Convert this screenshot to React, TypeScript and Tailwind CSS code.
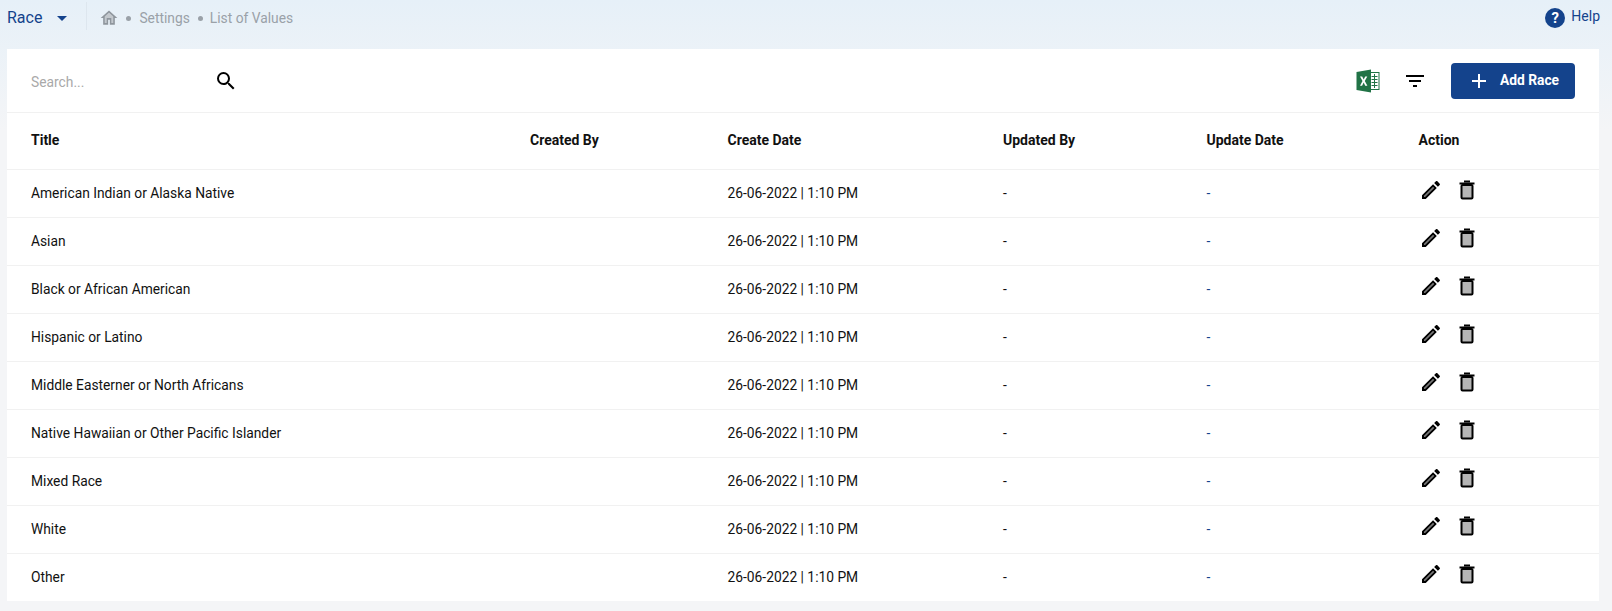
import { MdSearch, MdAdd, MdFilterList, MdArrowDropDown } from 'react-icons/md'

const rows = [
  'American Indian or Alaska Native',
  'Asian',
  'Black or African American',
  'Hispanic or Latino',
  'Middle Easterner or North Africans',
  'Native Hawaiian or Other Pacific Islander',
  'Mixed Race',
  'White',
  'Other',
]

const gridCols = 'grid grid-cols-[499px_197.5px_275.5px_203.5px_212px_1fr] pl-6 items-center'

function ExcelIcon() {
  return (
    <svg width="24" height="24" viewBox="0 0 24 24">
      <path d="M15 0.500 L0.500 3 V21 L15 23.500 Z" fill="#217346" />
      <rect x="15" y="3" width="8.500" height="18" fill="#217346" />
      <rect x="15" y="4" width="7.500" height="16" fill="#fff" />
      <path d="M15.500 7.500h6M15.500 10.500h6M15.500 13.500h6M15.500 16.500h6M18.500 5v14" stroke="#217346" strokeWidth="1" />
      <path d="M4 7.500h2.200l1.500 3 1.500-3h2.100l-2.500 4.500 2.600 4.700h-2.200l-1.500-3.100-1.600 3.100H4l2.500-4.700z" fill="#fff" />
    </svg>
  )
}

function PencilIcon() {
  return (
    <svg width="24" height="24" viewBox="0 0 24 24">
      <path d="M5 18.100l9.100-9.100.9.900L6 19H5z" fill="#777" />
      <path
        d="M14.060 9.020l.92.92L5.920 19H5v-.92l9.060-9.060M17.660 3c-.25 0-.51.1-.7.29l-1.830 1.830 3.750 3.750 1.830-1.830c.39-.39.39-1.020 0-1.410l-2.340-2.340c-.2-.2-.45-.29-.71-.29zm-3.600 3.190L3 17.250V21h3.750L17.810 9.940l-3.750-3.750z"
        fill="#000"
      />
    </svg>
  )
}

function HomeIcon() {
  return (
    <svg width="20" height="20" viewBox="0 0 24 24">
      <path d="M12 5.690l5 4.500V18h-2v-6H9v6H7v-7.810z" fill="#c3c8cd" />
      <path d="M12 5.690l5 4.500V18h-2v-6H9v6H7v-7.810l5-4.500M12 3L2 12h3v8h6v-6h2v6h6v-8h3L12 3z" fill="#8f969d" />
    </svg>
  )
}

function TrashIcon() {
  return (
    <svg width="18" height="20" viewBox="0 0 18 20">
      <rect x="3.500" y="5" width="11" height="13.500" rx="1" fill="#b5b5b5" stroke="#000" strokeWidth="2" />
      <path d="M1.500 3.500h15" stroke="#000" strokeWidth="2" />
      <path d="M6 1.500h6" stroke="#000" strokeWidth="2" />
    </svg>
  )
}

export default function App() {
  return (
    <div className="h-[611px] overflow-hidden bg-[linear-gradient(#e6f0f8_0,#f4f5f7_130px)] font-['Roboto',sans-serif] text-[14px] text-[#111]">
      <div className="flex h-[49px] pl-[7px] pr-3">
        <div className="flex h-[36px] items-center">
          <span className="text-[16px] text-[#14438c]">Race</span>
          <MdArrowDropDown className="ml-2 -mt-[1px] text-[#14438c]" size={24} />
          <div className="ml-[12px] -mt-[4px] h-[28px] w-px bg-[#dde6ee]" />
          <span className="ml-[12px]"><HomeIcon /></span>
          <span className="ml-[7px] h-[5px] w-[5px] rounded-full bg-[#9aa1a8]" />
          <span className="ml-[8px] text-[13.8px] text-[#9aa1a8]">Settings</span>
          <span className="ml-[8px] h-[5px] w-[5px] rounded-full bg-[#9aa1a8]" />
          <span className="ml-[7px] text-[13.8px] text-[#9aa1a8]">List of Values</span>
        </div>
        <div className="ml-auto flex h-[36px] items-center gap-[6px]">
          <span className="flex h-5 w-5 items-center justify-center rounded-full bg-[#14438c] text-[15px] font-bold text-white">?</span>
          <span className="-mt-[3px] text-[#14438c]">Help</span>
        </div>
      </div>

      <div className="ml-[7px] w-[1592px] bg-white">
        <div className="flex h-[64px] items-center border-b border-[#f1f1f1] pl-6 pr-[24px]">
          <span className="mt-[3px] w-[183px] text-[13.8px] text-[#a9a9a9]">Search...</span>
          <MdSearch size={24} className="text-black" />
          <div className="ml-auto flex items-center">
            <ExcelIcon />
            <MdFilterList size={24} className="ml-[23px] text-black" />
            <button className="ml-[24px] flex h-[36px] w-[124px] items-center justify-center gap-[9px] rounded-[4px] bg-[#14438c] text-[13.8px] font-bold text-white">
              <MdAdd size={24} />
              <span>Add Race</span>
            </button>
          </div>
        </div>

        <div className={`${gridCols} h-[57px] border-b border-[#f1f1f1] pb-px font-bold`}>
          <span>Title</span>
          <span>Created By</span>
          <span>Create Date</span>
          <span>Updated By</span>
          <span>Update Date</span>
          <span>Action</span>
        </div>

        {rows.map((title, i) => (
          <div
            key={title}
            className={`${gridCols} text-[13.8px] ${i < rows.length - 1 ? 'h-[48px] border-b border-[#f1f1f1]' : 'h-[47px]'}`}
          >
            <span>{title}</span>
            <span></span>
            <span>26-06-2022 | 1:10 PM</span>
            <span>-</span>
            <span className="text-[#14438c]">-</span>
            <div className="-mt-[8px] flex items-center gap-[15px]">
              <PencilIcon />
              <TrashIcon />
            </div>
          </div>
        ))}
      </div>
    </div>
  )
}
